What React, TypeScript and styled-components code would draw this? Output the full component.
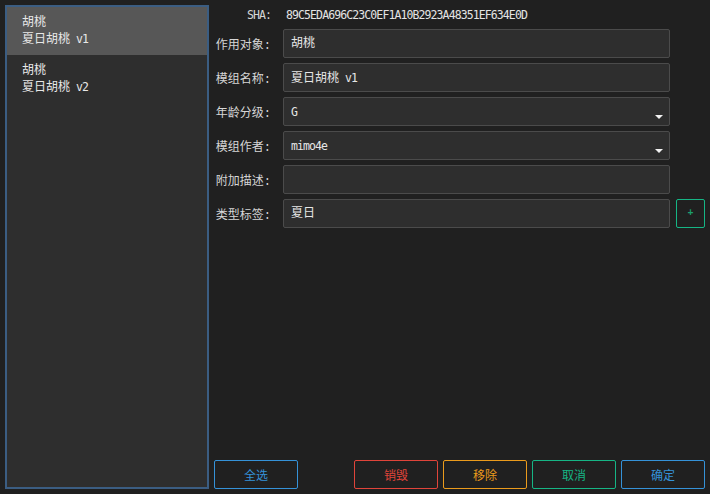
import React from 'react';
import styled, { createGlobalStyle } from 'styled-components';

interface ModItem {
  id: string;
  target: string;
  name: string;
  version: string;
}

type Tone = 'blue' | 'red' | 'orange' | 'green';

const toneColors: Record<Tone, string> = {
  blue: '#3592d8',
  red: '#e0443a',
  orange: '#eb9b1c',
  green: '#16b585',
};

const GlobalStyle = createGlobalStyle`
  html, body {
    margin: 0;
    padding: 0;
    background: #202020;
  }
  body {
    font-family: "Liberation Mono", "Noto Sans CJK SC", monospace;
    font-size: 12px;
    color: #dedede;
  }
`;

// latin text in the original is half-width (6px per char)
const Latin = styled.span`
  font-family: "DejaVu Sans Mono", monospace;
  font-size: 11.5px;
  letter-spacing: -0.9px;
`;

const Window = styled.div`
  width: 710px;
  height: 494px;
  box-sizing: border-box;
  padding: 5px;
  display: flex;
  gap: 5px;
  background: #202020;
`;

const ListPanel = styled.div`
  width: 204px;
  flex-shrink: 0;
  box-sizing: border-box;
  border: 2px solid #3b5d82;
  background: #2e2e2e;
  display: flex;
  flex-direction: column;
`;

const ListItem = styled.div<{ $selected: boolean }>`
  height: 48px;
  box-sizing: border-box;
  padding: 8px 15px;
  background: ${p => (p.$selected ? '#575757' : 'transparent')};
  line-height: 16px;
  color: #e8e8e8;
`;

const FormColumn = styled.div`
  flex: 1;
  display: flex;
  flex-direction: column;
`;

const FormGrid = styled.div`
  display: grid;
  grid-template-columns: 69px 1fr 35px;
  row-gap: 5px;
  align-items: center;
`;

const Label = styled.div`
  text-align: right;
  padding-right: 12px;
  padding-top: 1px;
  color: #d6d6d6;
  white-space: nowrap;
`;

const ShaValue = styled.div`
  grid-column: 2 / 4;
  height: 19px;
  line-height: 20px;
  padding-left: 3px;
  color: #e4e4e4;
`;

const Field = styled.div`
  position: relative;
  height: 29px;
  box-sizing: border-box;
  border: 1px solid #4b4b4b;
  border-radius: 2px;
  background: #2e2e2e;
  padding: 1px 7px 0;
  line-height: 27px;
  color: #e6e6e6;
`;

const Caret = styled.div`
  position: absolute;
  right: 6px;
  bottom: 6px;
  width: 0;
  height: 0;
  border-left: 4px solid transparent;
  border-right: 4px solid transparent;
  border-top: 4px solid #f2f2f2;
`;

const PlusButton = styled.button`
  justify-self: end;
  width: 29px;
  height: 29px;
  box-sizing: border-box;
  padding: 0;
  background: transparent;
  border: 1px solid ${toneColors.green};
  border-radius: 2px;
  color: #1c9e6c;
  font-family: inherit;
  font-size: 10px;
  font-weight: bold;
`;

const Spacer = styled.div`
  flex: 1;
`;

const ActionBar = styled.div`
  display: flex;
  gap: 5px;
`;

const ActionButton = styled.button<{ $tone: Tone }>`
  width: 84px;
  height: 29px;
  box-sizing: border-box;
  background: transparent;
  border: 1px solid ${p => toneColors[p.$tone]};
  border-radius: 2px;
  color: ${p => toneColors[p.$tone]};
  font-family: inherit;
  font-size: 12px;
  padding: 0;
`;

const Gap = styled.div`
  flex: 1;
`;

const mods: ModItem[] = [
  { id: 'v1', target: '胡桃', name: '夏日胡桃', version: 'v1' },
  { id: 'v2', target: '胡桃', name: '夏日胡桃', version: 'v2' },
];

export default function App() {
  return (
    <>
      <GlobalStyle />
      <Window>
        <ListPanel>
          {mods.map((m, i) => (
            <ListItem key={m.id} $selected={i === 0}>
              <div>{m.target}</div>
              <div>
                {m.name}<Latin> {m.version}</Latin>
              </div>
            </ListItem>
          ))}
        </ListPanel>

        <FormColumn>
          <FormGrid>
            <Label><Latin>SHA:</Latin></Label>
            <ShaValue>
              <Latin>89C5EDA696C23C0EF1A10B2923A48351EF634E0D</Latin>
            </ShaValue>

            <Label>作用对象:</Label>
            <Field>胡桃</Field>
            <div />

            <Label>模组名称:</Label>
            <Field>夏日胡桃<Latin> v1</Latin></Field>
            <div />

            <Label>年龄分级:</Label>
            <Field>
              <Latin>G</Latin>
              <Caret />
            </Field>
            <div />

            <Label>模组作者:</Label>
            <Field>
              <Latin>mimo4e</Latin>
              <Caret />
            </Field>
            <div />

            <Label>附加描述:</Label>
            <Field />
            <div />

            <Label>类型标签:</Label>
            <Field>夏日</Field>
            <PlusButton>+</PlusButton>
          </FormGrid>

          <Spacer />

          <ActionBar>
            <ActionButton $tone="blue">全选</ActionButton>
            <Gap />
            <ActionButton $tone="red">销毁</ActionButton>
            <ActionButton $tone="orange">移除</ActionButton>
            <ActionButton $tone="green">取消</ActionButton>
            <ActionButton $tone="blue">确定</ActionButton>
          </ActionBar>
        </FormColumn>
      </Window>
    </>
  );
}
